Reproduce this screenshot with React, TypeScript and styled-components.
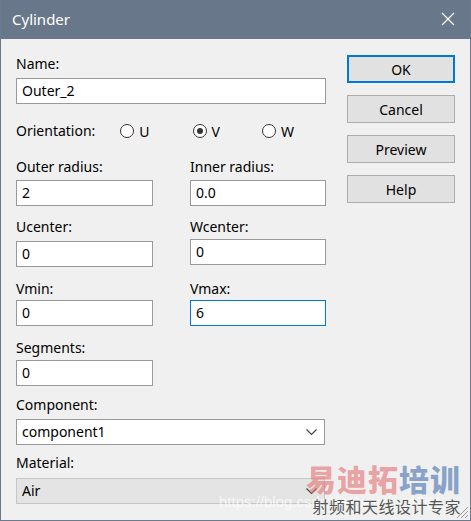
import React from "react";
import styled, { createGlobalStyle } from "styled-components";

const Global = createGlobalStyle`
  html, body { margin: 0; padding: 0; background: #f0f0f0; }
  body { font-family: "Noto Sans", "Liberation Sans", sans-serif; }
`;

const Window = styled.div`
  position: relative;
  width: 471px;
  height: 521px;
  box-sizing: border-box;
  border: 1px solid #6b7a8c;
  border-top: none;
  background: #f0f0f0;
  display: flex;
  flex-direction: column;
  overflow: hidden;
`;

const TitleBar = styled.div`
  height: 38px;
  margin: 0 -1px;
  background: #687789;
  color: #fff;
  display: flex;
  align-items: center;
  justify-content: space-between;
  padding: 0 12px 1px 12px;
  font-size: 15px;
`;

const CloseBtn = styled.div`
  width: 14px;
  height: 14px;
  margin-right: 4px;
  display: flex;
`;

const Body = styled.div`
  flex: 1;
  display: flex;
  padding: 16px 15px 0 15px;
  gap: 21px;
`;

const Form = styled.div`
  width: 310px;
  display: flex;
  flex-direction: column;
`;

const Field = styled.div<{ $top: number; $gap?: number }>`
  display: flex;
  flex-direction: column;
  gap: ${(p) => p.$gap ?? 4}px;
  margin-top: ${(p) => p.$top}px;
`;

const Label = styled.div`
  font-size: 14px;
  line-height: 18px;
  height: 18px;
  color: #000;
  white-space: nowrap;
`;

const Pair = styled.div<{ $top: number }>`
  display: grid;
  grid-template-columns: 137px 136px;
  column-gap: 37px;
  margin-top: ${(p) => p.$top}px;
`;

const Input = styled.div<{ $w?: number; $focus?: boolean }>`
  box-sizing: border-box;
  width: ${(p) => (p.$w ? `${p.$w}px` : "100%")};
  height: 26px;
  border: 1px solid ${(p) => (p.$focus ? "#0078d7" : "#999999")};
  background: #fff;
  font-size: 14px;
  line-height: 24px;
  padding-left: 5px;
  color: #000;
`;

const Select = styled.div<{ $disabled?: boolean }>`
  box-sizing: border-box;
  width: 309px;
  height: 26px;
  border: 1px solid ${(p) => (p.$disabled ? "#c6c6c6" : "#999999")};
  background: ${(p) => (p.$disabled ? "#e4e4e4" : "#fff")};
  font-size: 14px;
  line-height: 24px;
  padding: 0 7px 0 5px;
  display: flex;
  justify-content: space-between;
  align-items: center;
  color: #000;
`;

const OrientRow = styled.div`
  margin-top: 18px;
  height: 18px;
  display: flex;
  align-items: center;
`;

const Radio = styled.div<{ $x: number }>`
  display: flex;
  align-items: center;
  gap: 5px;
  font-size: 14px;
  margin-left: ${(p) => p.$x}px;
`;

const RadioCircle = styled.div<{ $checked?: boolean }>`
  box-sizing: border-box;
  width: 14px;
  height: 14px;
  border-radius: 50%;
  border: 1px solid #333;
  background: #fff;
  display: flex;
  align-items: center;
  justify-content: center;
  &::after {
    content: "";
    display: ${(p) => (p.$checked ? "block" : "none")};
    width: 6px;
    height: 6px;
    border-radius: 50%;
    background: #333;
  }
`;

const Buttons = styled.div`
  display: flex;
  flex-direction: column;
  gap: 12px;
  padding-top: 0px;
`;

const Button = styled.div<{ $default?: boolean }>`
  box-sizing: border-box;
  width: 108px;
  height: 28px;
  border: ${(p) => (p.$default ? "2px solid #0078d7" : "1px solid #adadad")};
  background: #e1e1e1;
  font-size: 14px;
  display: flex;
  align-items: center;
  justify-content: center;
  color: #000;
`;

const Watermark = styled.div`
  position: absolute;
  right: 9px;
  bottom: 4px;
  display: flex;
  flex-direction: column;
  align-items: flex-end;
  pointer-events: none;
`;

const WmBig = styled.div`
  font-family: "Noto Sans CJK SC", sans-serif;
  font-weight: 900;
  font-size: 30px;
  line-height: 32px;
  letter-spacing: 1px;
  margin-bottom: 2px;
`;

const WmRed = styled.span`
  color: rgba(228, 112, 112, 0.62);
`;

const WmBlue = styled.span`
  color: rgba(96, 134, 184, 0.72);
`;

const WmSmall = styled.div`
  font-family: "Noto Sans CJK SC", sans-serif;
  font-size: 16px;
  line-height: 20px;
  color: #555;
  letter-spacing: 0.5px;
`;

const WmUrl = styled.div`
  position: absolute;
  left: 218px;
  bottom: 10px;
  font-size: 15px;
  color: rgba(255, 255, 255, 0.7);
  font-family: "Liberation Sans", sans-serif;
  pointer-events: none;
  white-space: nowrap;
`;

const Grip = styled.svg`
  position: absolute;
  right: 1px;
  bottom: 1px;
`;

const Chevron = () => (
  <svg width="11" height="7" viewBox="0 0 11 7">
    <polyline points="0.5,0.5 5.5,5.5 10.5,0.5" fill="none" stroke="#444" strokeWidth="1.2" />
  </svg>
);

export default function App() {
  return (
    <>
      <Global />
      <Window>
        <TitleBar>
          <span>Cylinder</span>
          <CloseBtn>
            <svg width="14" height="14" viewBox="0 0 14 14">
              <path d="M1 1 L13 13 M13 1 L1 13" stroke="#fff" strokeWidth="1.2" />
            </svg>
          </CloseBtn>
        </TitleBar>
        <Body>
          <Form>
            <Field $top={0} $gap={5}>
              <Label>Name:</Label>
              <Input>Outer_2</Input>
            </Field>
            <OrientRow>
              <Label>Orientation:</Label>
              <Radio $x={25}>
                <RadioCircle />U
              </Radio>
              <Radio $x={43}>
                <RadioCircle $checked />V
              </Radio>
              <Radio $x={42}>
                <RadioCircle />W
              </Radio>
            </OrientRow>
            <Pair $top={18}>
              <Field $top={0}>
                <Label>Outer radius:</Label>
                <Input>2</Input>
              </Field>
              <Field $top={0}>
                <Label>Inner radius:</Label>
                <Input>0.0</Input>
              </Field>
            </Pair>
            <Pair $top={12}>
              <Field $top={0} $gap={5}>
                <Label>Ucenter:</Label>
                <Input>0</Input>
              </Field>
              <Field $top={0} $gap={3}>
                <Label>Wcenter:</Label>
                <Input>0</Input>
              </Field>
            </Pair>
            <Pair $top={13}>
              <Field $top={0} $gap={2}>
                <Label>Vmin:</Label>
                <Input>0</Input>
              </Field>
              <Field $top={0} $gap={2}>
                <Label>Vmax:</Label>
                <Input $focus>6</Input>
              </Field>
            </Pair>
            <Field $top={13} $gap={3}>
              <Label>Segments:</Label>
              <Input $w={137}>0</Input>
            </Field>
            <Field $top={10} $gap={5}>
              <Label>Component:</Label>
              <Select>
                <span>component1</span>
                <Chevron />
              </Select>
            </Field>
            <Field $top={9} $gap={6}>
              <Label>Material:</Label>
              <Select $disabled>
                <span>Air</span>
                <Chevron />
              </Select>
            </Field>
          </Form>
          <Buttons>
            <Button $default>OK</Button>
            <Button>Cancel</Button>
            <Button>Preview</Button>
            <Button>Help</Button>
          </Buttons>
        </Body>
        <WmUrl>https://blog.csdn.net/weixin_4264</WmUrl>
        <Watermark>
          <WmBig>
            <WmRed>易迪拓</WmRed>
            <WmBlue>培训</WmBlue>
          </WmBig>
          <WmSmall>射频和天线设计专家</WmSmall>
        </Watermark>
        <Grip width="12" height="12" viewBox="0 0 12 12">
          <path d="M11 4 L4 11 M11 8 L8 11 M11 0 L0 11" stroke="#999" strokeWidth="1" />
        </Grip>
      </Window>
    </>
  );
}
